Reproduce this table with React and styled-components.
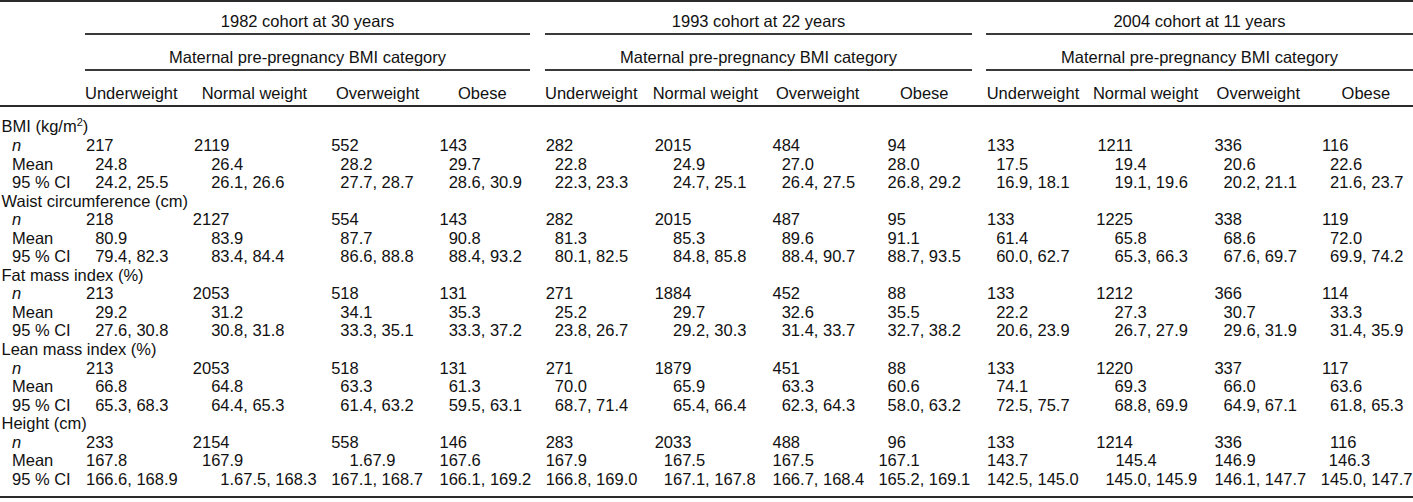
import React from "react";
import styled, { createGlobalStyle } from "styled-components";

const GlobalStyle = createGlobalStyle`
  body {
    margin: 0;
    background: #fff;
    color: #111;
    font-family: "Liberation Sans", Arial, Helvetica, sans-serif;
    font-size: 16.5px;
    line-height: 18.42px;
  }
`;

const COLS =
  "73.5px 116px 129.2px 108.3px 106.2px 118.2px 108.7px 105.9px 108.6px 118.4px 109px 106.4px 104.6px";

const Table = styled.div`
  width: 1413px;
  border-top: 2px solid #2b2b2b;
  border-bottom: 2px solid #2b2b2b;
`;

const SpanRow = styled.div`
  display: grid;
  grid-template-columns: 85px 445px 15px 427px 14px 427px;
`;

const SpanCell = styled.div`
  padding: ${(p) => p.$top}px 0 2.8px;
  text-align: center;
  border-bottom: 2px solid ${(p) => (p.$line ? "#3a3a3a" : "transparent")};
`;

const HeadRow = styled.div`
  display: grid;
  grid-template-columns: ${COLS};
  border-bottom: 2px solid #2b2b2b;
`;

const HeadCell = styled.div`
  padding: 12.8px 0 2.8px ${(p) => p.$pad || 0}px;
  white-space: nowrap;
`;

const Body = styled.div`
  display: grid;
  grid-template-columns: ${COLS};
  grid-auto-rows: 18.56px;
  padding: 10.4px 0 7.4px;
`;

const GroupLabel = styled.div`
  grid-column: 1 / -1;
  padding-left: 1.5px;
  white-space: nowrap;

  sup {
    font-size: 11px;
    line-height: 0;
    vertical-align: 6px;
  }
`;

const RowLabel = styled.div`
  padding-left: 12px;
  white-space: nowrap;
  font-style: ${(p) => (p.$italic ? "italic" : "normal")};
`;

const NumCell = styled.div`
  display: flex;
  white-space: nowrap;
  padding-left: ${(p) => p.$shift || 0}px;
`;

const IntPart = styled.span`
  width: 40px;
  flex: none;
  text-align: right;
`;

const Num = ({ value, shift }) => {
  const dot = value.indexOf(".");
  const int = dot < 0 ? value : value.slice(0, dot);
  const rest = dot < 0 ? "" : value.slice(dot);
  return (
    <NumCell $shift={shift}>
      <IntPart>{int}</IntPart>
      <span>{rest}</span>
    </NumCell>
  );
};

const cohorts = [
  "1982 cohort at 30 years",
  "1993 cohort at 22 years",
  "2004 cohort at 11 years",
];

const headings = [
  ["Underweight", 11.5],
  ["Normal weight", 12.2],
  ["Overweight", 17.3],
  ["Obese", 31],
  ["Underweight", 11.8],
  ["Normal weight", 1.3],
  ["Overweight", 15.9],
  ["Obese", 34],
  ["Underweight", 12.1],
  ["Normal weight", 0],
  ["Overweight", 14.7],
  ["Obese", 33.3],
];

const measures = [
  {
    label: (
      <>
        BMI (kg/m<sup>2</sup>)
      </>
    ),
    n: "217 2119 552 143 282 2015 484 94 133 1211 336 116",
    mean: "24.8 26.4 28.2 29.7 22.8 24.9 27.0 28.0 17.5 19.4 20.6 22.6",
    ci: "24.2, 25.5|26.1, 26.6|27.7, 28.7|28.6, 30.9|22.3, 23.3|24.7, 25.1|26.4, 27.5|26.8, 29.2|16.9, 18.1|19.1, 19.6|20.2, 21.1|21.6, 23.7",
  },
  {
    label: "Waist circumference (cm)",
    n: "218 2127 554 143 282 2015 487 95 133 1225 338 119",
    mean: "80.9 83.9 87.7 90.8 81.3 85.3 89.6 91.1 61.4 65.8 68.6 72.0",
    ci: "79.4, 82.3|83.4, 84.4|86.6, 88.8|88.4, 93.2|80.1, 82.5|84.8, 85.8|88.4, 90.7|88.7, 93.5|60.0, 62.7|65.3, 66.3|67.6, 69.7|69.9, 74.2",
  },
  {
    label: "Fat mass index (%)",
    n: "213 2053 518 131 271 1884 452 88 133 1212 366 114",
    mean: "29.2 31.2 34.1 35.3 25.2 29.7 32.6 35.5 22.2 27.3 30.7 33.3",
    ci: "27.6, 30.8|30.8, 31.8|33.3, 35.1|33.3, 37.2|23.8, 26.7|29.2, 30.3|31.4, 33.7|32.7, 38.2|20.6, 23.9|26.7, 27.9|29.6, 31.9|31.4, 35.9",
  },
  {
    label: "Lean mass index (%)",
    n: "213 2053 518 131 271 1879 451 88 133 1220 337 117",
    mean: "66.8 64.8 63.3 61.3 70.0 65.9 63.3 60.6 74.1 69.3 66.0 63.6",
    ci: "65.3, 68.3|64.4, 65.3|61.4, 63.2|59.5, 63.1|68.7, 71.4|65.4, 66.4|62.3, 64.3|58.0, 63.2|72.5, 75.7|68.8, 69.9|64.9, 67.1|61.8, 65.3",
  },
  {
    label: "Height (cm)",
    n: "233 2154 558 146 283 2033 488 96 133 1214 336 116",
    mean: "167.8 167.9 1.67.9 167.6 167.9 167.5 167.5 167.1 143.7 145.4 146.9 146.3",
    ci: "166.6, 168.9|1.67.5, 168.3|167.1, 168.7|166.1, 169.2|166.8, 169.0|167.1, 167.8|166.7, 168.4|165.2, 169.1|142.5, 145.0|145.0, 145.9|146.1, 147.7|145.0, 147.7",
    // hand-set odd spacing in the printed table
    shifts: { n: { 11: 8 }, mean: { 9: 10, 11: 8 }, ci: { 2: -3 } },
  },
];

const stats = [
  { key: "n", label: "n", italic: true, split: " " },
  { key: "mean", label: "Mean", split: " " },
  { key: "ci", label: "95 % CI", split: "|" },
];

export default function App() {
  return (
    <>
      <GlobalStyle />
      <Table>
        <SpanRow>
          <SpanCell $top={9.8} />
          <SpanCell $top={9.8} $line>{cohorts[0]}</SpanCell>
          <SpanCell $top={9.8} />
          <SpanCell $top={9.8} $line>{cohorts[1]}</SpanCell>
          <SpanCell $top={9.8} />
          <SpanCell $top={9.8} $line>{cohorts[2]}</SpanCell>
        </SpanRow>
        <SpanRow>
          <SpanCell $top={12.8} />
          <SpanCell $top={12.8} $line>Maternal pre-pregnancy BMI category</SpanCell>
          <SpanCell $top={12.8} />
          <SpanCell $top={12.8} $line>Maternal pre-pregnancy BMI category</SpanCell>
          <SpanCell $top={12.8} />
          <SpanCell $top={12.8} $line>Maternal pre-pregnancy BMI category</SpanCell>
        </SpanRow>
        <HeadRow>
          <HeadCell />
          {headings.map(([text, pad], i) => (
            <HeadCell key={i} $pad={pad}>
              {text}
            </HeadCell>
          ))}
        </HeadRow>
        <Body>
          {measures.map((m, mi) => (
            <React.Fragment key={mi}>
              <GroupLabel>{m.label}</GroupLabel>
              {stats.map((s) => (
                <React.Fragment key={s.key}>
                  <RowLabel $italic={s.italic}>{s.label}</RowLabel>
                  {m[s.key].split(s.split).map((v, i) => (
                    <Num
                      key={i}
                      value={v}
                      shift={m.shifts?.[s.key]?.[i]}
                    />
                  ))}
                </React.Fragment>
              ))}
            </React.Fragment>
          ))}
        </Body>
      </Table>
    </>
  );
}
